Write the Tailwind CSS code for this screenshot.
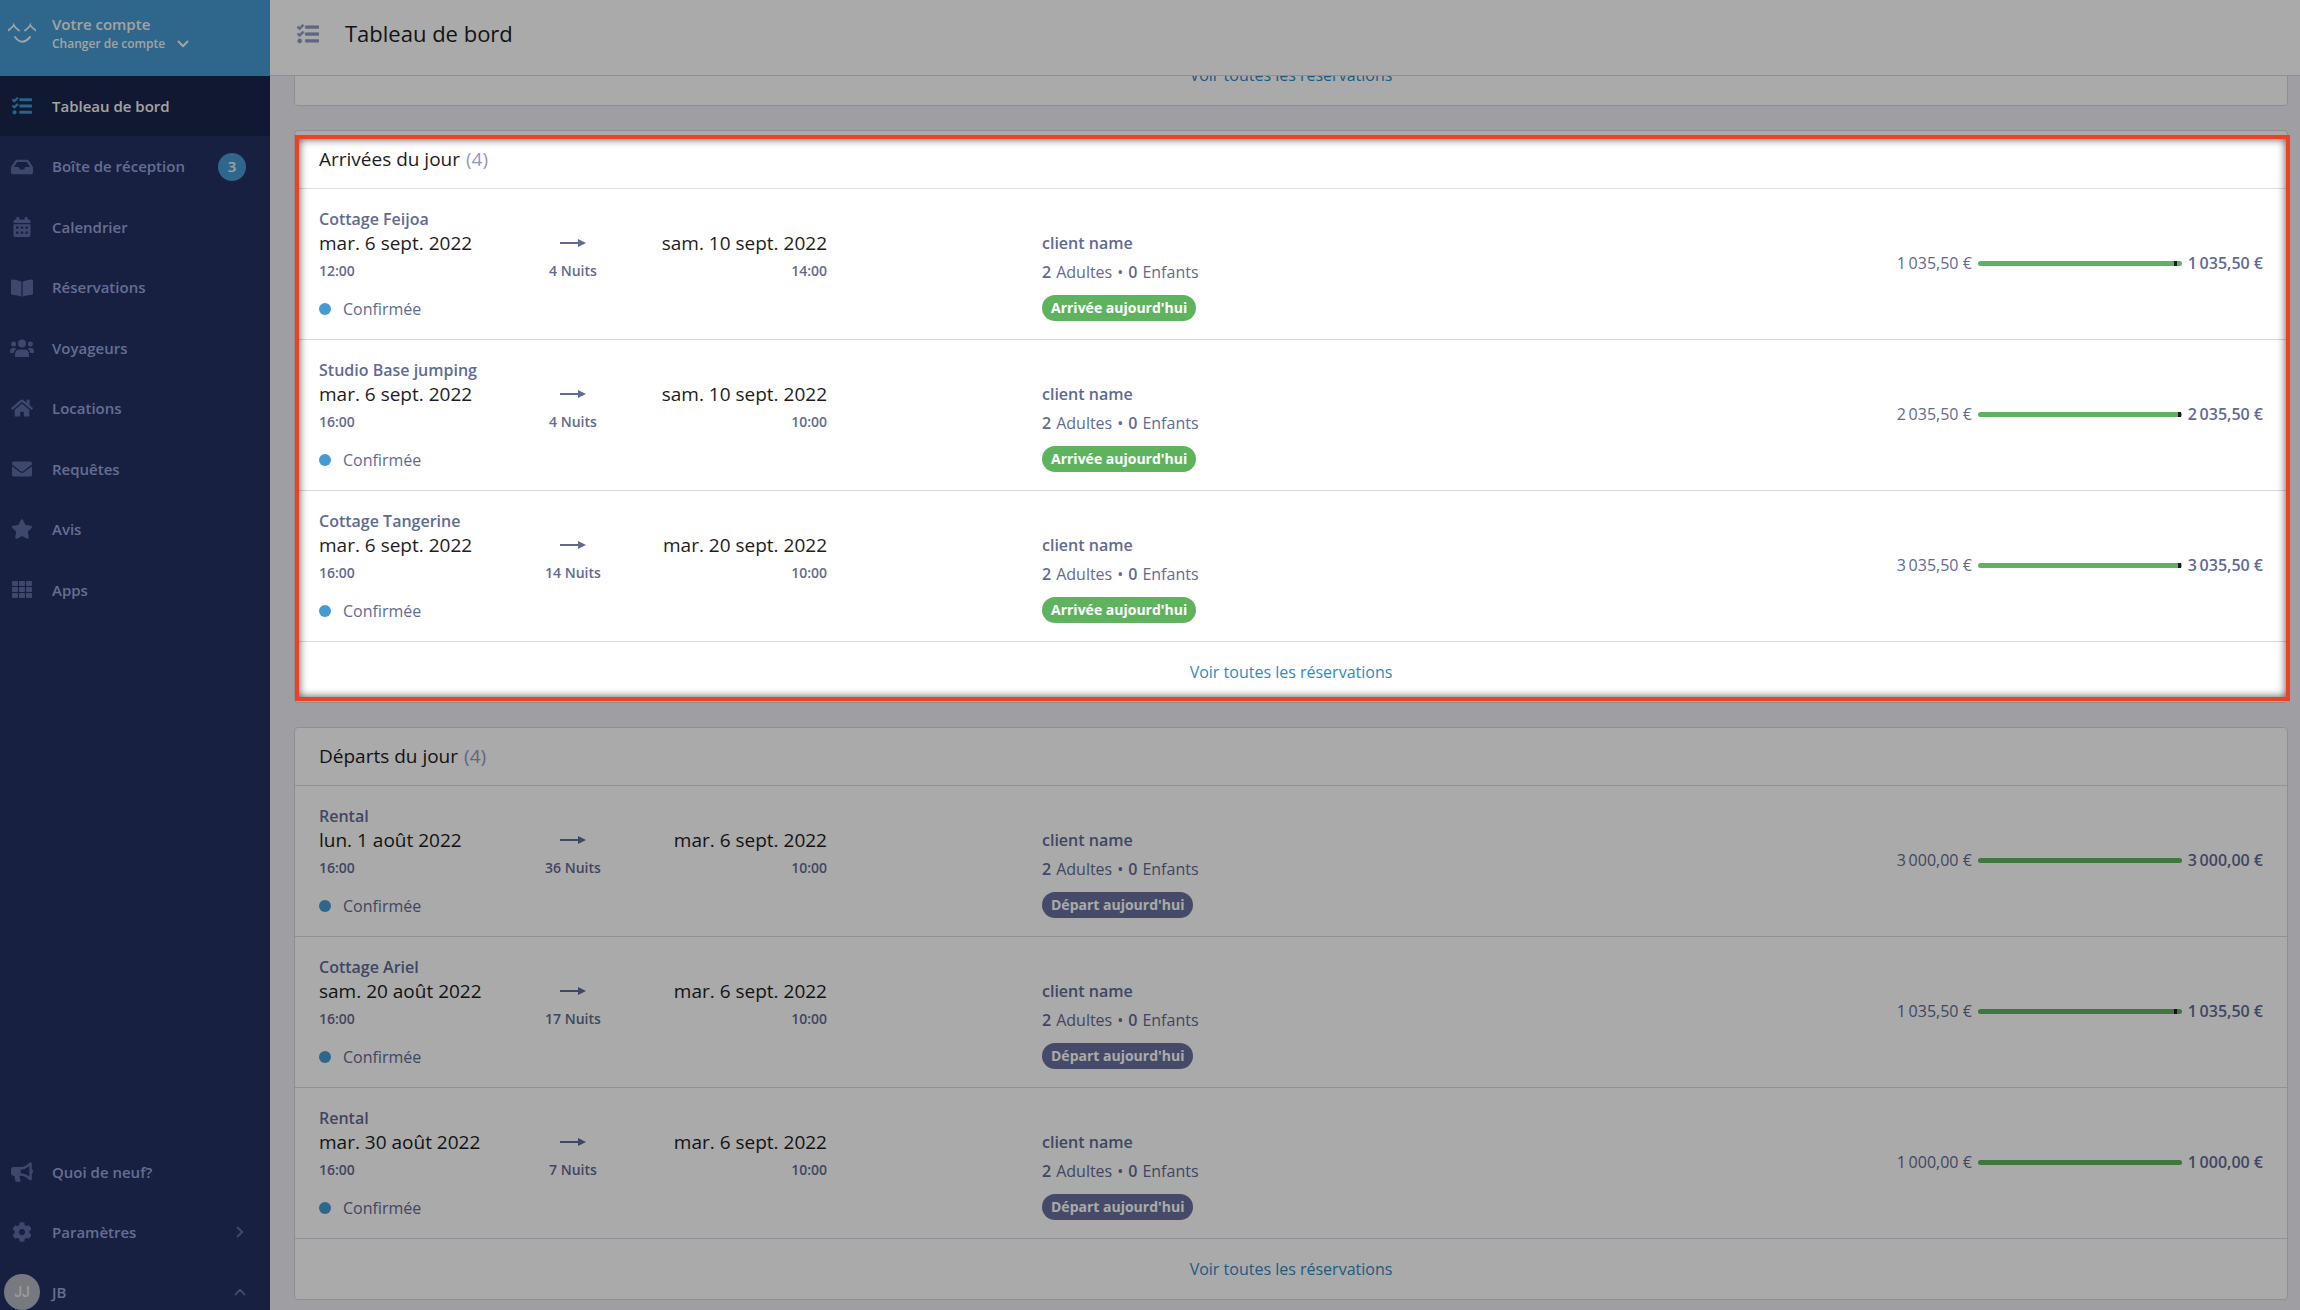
<!DOCTYPE html>
<html lang="fr">
<head>
    <meta charset="UTF-8">
    <meta name="viewport" content="width=device-width, initial-scale=1.0">
    <title>Tableau de bord</title>

    <!-- Tailwind CSS -->
    <script src="https://cdn.jsdelivr.net/npm/@tailwindcss/browser@4"></script>
</head>
<body class="bg-[#efeff5] font-['Open_Sans',sans-serif] text-[#5f6b93]">

    <!-- Icônes partagées -->
    <svg class="hidden">
        <symbol id="icon-tasks" viewBox="0 0 512 512"><path d="M139.61 35.5a12 12 0 0 0-17 0L58.93 98.81l-22.7-22.12a12 12 0 0 0-17 0L3.53 92.41a12 12 0 0 0 0 17l47.59 47.4a12.78 12.78 0 0 0 17.61 0l15.59-15.62L156.52 69a12.09 12.09 0 0 0 .09-17zm0 159.19a12 12 0 0 0-17 0l-63.68 63.72-22.7-22.1a12 12 0 0 0-17 0L3.53 252a12 12 0 0 0 0 17L51 316.5a12.77 12.77 0 0 0 17.6 0l15.7-15.69 72.2-72.22a12 12 0 0 0 .09-16.9zM64 368c-26.49 0-48.59 21.5-48.59 48S37.53 464 64 464a48 48 0 0 0 0-96zm432 16H208a16 16 0 0 0-16 16v32a16 16 0 0 0 16 16h288a16 16 0 0 0 16-16v-32a16 16 0 0 0-16-16zm0-320H208a16 16 0 0 0-16 16v32a16 16 0 0 0 16 16h288a16 16 0 0 0 16-16V80a16 16 0 0 0-16-16zm0 160H208a16 16 0 0 0-16 16v32a16 16 0 0 0 16 16h288a16 16 0 0 0 16-16v-32a16 16 0 0 0-16-16z" stroke="currentColor" stroke-width="12"/></symbol>
        <symbol id="icon-chevron" viewBox="0 0 12 12"><path d="M1.500 3.500 6 8.200l4.500-4.700" fill="none" stroke="currentColor" stroke-width="2" stroke-linecap="round" stroke-linejoin="round"/></symbol>
    </svg>

    <div class="flex h-screen overflow-hidden">

        <!-- Menu latéral -->
        <aside class="flex w-[270px] shrink-0 flex-col bg-[#233062] text-[15px] font-semibold text-[#98a5dc]">
            <button type="button" class="flex h-[76px] items-center bg-[#4699d3] pb-2 text-left text-[#f5f5f0]">
                <svg class="mx-2 h-[22px] w-7" viewBox="0 0 28 22" fill="none" stroke="currentColor" stroke-width="2" stroke-linecap="round"><path d="M0 7.500Q5 4 5.700 2 7 5 11 7.500M17 7.500Q21 5 22.300 2 23 4 28 7.500" stroke-width="1.800"/><path d="M7 14q7 9.500 15 0"/></svg>
                <span class="ml-2 flex flex-col">
                    <span class="leading-5">Votre compte</span>
                    <span class="flex items-center gap-3 text-xs leading-5">Changer de compte <svg class="size-3"><use href="#icon-chevron"/></svg></span>
                </span>
            </button>

            <nav class="grid h-[544px] grid-rows-9">
                <a href="#" class="flex items-center bg-[#18244b] text-[#f5f5f0]">
                    <svg class="mx-3 size-5 fill-[#3d97d3] text-[#3d97d3]"><use href="#icon-tasks"/></svg>
                    <span class="ml-2">Tableau de bord</span>
                </a>
                <a href="#" class="flex items-center">
                    <svg class="mx-[11px] h-5 w-[22px] fill-[#5d6ba3]" viewBox="0 0 576 512"><path d="M567.938 243.908L462.25 85.374A48.003 48.003 0 0 0 422.311 64H153.689a48 48 0 0 0-39.938 21.374L8.062 243.908A47.994 47.994 0 0 0 0 270.533V400c0 26.51 21.49 48 48 48h480c26.51 0 48-21.49 48-48V270.533a47.994 47.994 0 0 0-8.062-26.625zM162.252 128h251.497l85.333 128H376l-32 64H232l-32-64H76.918l85.334-128z"/></svg>
                    <span class="ml-2 flex-1">Boîte de réception</span>
                    <span class="mr-6 grid size-7 place-items-center rounded-full bg-[#4699d3] text-[#f5f5f0]">3</span>
                </a>
                <a href="#" class="flex items-center">
                    <svg class="mx-3 size-5 fill-[#5d6ba3]" viewBox="0 0 20 20"><path fill-rule="evenodd" d="M5 0h1.600q.6 0 .6.600V2.500h5.600V.6q0-.6.600-.6H15q.6 0 .6.600V2.500h1.200q1.700 0 1.700 1.700V6h-17V4.200q0-1.700 1.700-1.700h1.200V.6Q4.400 0 5 0zM1.500 7.200h17v11.100q0 1.700-1.700 1.700H3.200q-1.700 0-1.700-1.700zM4 9.500v2.300h2.500V9.500zm4.700 0v2.300h2.500V9.500zm4.700 0v2.300h2.500V9.500zM4 14.500v2.300h2.500v-2.300zm4.700 0v2.300h2.500v-2.300zm4.700 0v2.300h2.500v-2.300z"/></svg>
                    <span class="ml-2">Calendrier</span>
                </a>
                <a href="#" class="flex items-center">
                    <svg class="mx-[11px] h-5 w-[22px] fill-[#5d6ba3]" viewBox="0 0 576 512"><path d="M542.22 32.05c-54.8 3.11-163.72 14.43-230.96 55.59-4.64 2.84-7.27 7.89-7.27 13.17v363.87c0 11.55 12.63 18.85 23.28 13.49 69.18-34.82 169.23-44.32 218.7-46.92 16.89-.89 30.02-14.43 30.02-30.66V62.75c.01-17.71-15.35-31.74-33.77-30.7zM264.73 87.64C197.5 46.48 88.58 35.17 33.78 32.05 15.36 31.01 0 45.04 0 62.75V400.6c0 16.24 13.13 29.78 30.02 30.66 49.49 2.6 149.59 12.11 218.77 46.95 10.62 5.35 23.21-1.94 23.21-13.46V100.63c0-5.29-2.62-10.14-7.27-12.99z"/></svg>
                    <span class="ml-2">Réservations</span>
                </a>
                <a href="#" class="flex items-center">
                    <svg class="mx-[10px] h-[18px] w-6 fill-[#5d6ba3]" viewBox="0 0 24 18"><circle cx="12" cy="4.500" r="4"/><circle cx="3.600" cy="5" r="2.500"/><circle cx="20.400" cy="5" r="2.500"/><path d="M5 17.500v-2q0-5 5-5h4q5 0 5 5v2q0 .5-1 .5H6q-1 0-1-.5zM0 12.500Q0 9 3 9h1.500q1.300 0 2 .6Q4 11.200 3.700 14H1q-1 0-1-1.500zM24 12.500Q24 9 21 9h-1.500q-1.300 0-2 .6 2.500 1.600 2.800 4.400H23q1 0 1-1.500z"/></svg>
                    <span class="ml-2">Voyageurs</span>
                </a>
                <a href="#" class="flex items-center">
                    <svg class="mx-[11px] h-5 w-[22px] fill-[#5d6ba3]" viewBox="0 0 576 512"><path d="M280.37 148.26L96 300.11V464a16 16 0 0 0 16 16l112.06-.29a16 16 0 0 0 15.92-16V368a16 16 0 0 1 16-16h64a16 16 0 0 1 16 16v95.64a16 16 0 0 0 16 16.05L464 480a16 16 0 0 0 16-16V300L295.67 148.26a12.19 12.19 0 0 0-15.3 0zM571.6 251.47L488 182.56V44.05a12 12 0 0 0-12-12h-56a12 12 0 0 0-12 12v72.61L318.47 43a48 48 0 0 0-61 0L4.34 251.47a12 12 0 0 0-1.600 16.9l25.5 31A12 12 0 0 0 45.15 301l235.22-193.74a12.19 12.19 0 0 1 15.3 0L530.9 301a12 12 0 0 0 16.9-1.600l25.5-31a12 12 0 0 0-1.700-16.93z"/></svg>
                    <span class="ml-2">Locations</span>
                </a>
                <a href="#" class="flex items-center">
                    <svg class="mx-3 size-5 fill-[#5d6ba3]" viewBox="0 0 512 512"><path d="M502.3 190.8c3.9-3.1 9.7-.2 9.7 4.7V400c0 26.5-21.5 48-48 48H48c-26.5 0-48-21.5-48-48V195.6c0-5 5.7-7.8 9.7-4.7 22.4 17.4 52.1 39.5 154.1 113.6 21.1 15.4 56.7 47.8 92.2 47.6 35.7.3 72-32.8 92.3-47.6 102-74.1 131.6-96.3 154-113.7zM256 320c23.2.4 56.6-29.2 73.4-41.4 132.7-96.3 142.8-104.7 173.4-128.7 5.8-4.5 9.2-11.5 9.2-18.9v-19c0-26.5-21.5-48-48-48H48c-26.5 0-48 21.5-48 48v19c0 7.4 3.4 14.3 9.2 18.9 30.6 23.9 40.7 32.4 173.4 128.7 16.8 12.2 50.2 41.8 73.4 41.4z"/></svg>
                    <span class="ml-2">Requêtes</span>
                </a>
                <a href="#" class="flex items-center">
                    <svg class="mx-[11px] h-5 w-[22px] fill-[#5d6ba3]" viewBox="0 0 576 512"><path d="M259.3 17.8L194 150.2 47.9 171.5c-26.2 3.8-36.7 36.1-17.7 54.6l105.7 103-25 145.5c-4.5 26.3 23.2 46 46.4 33.7L288 439.6l130.7 68.7c23.2 12.2 50.9-7.4 46.4-33.7l-25-145.5 105.7-103c19-18.5 8.5-50.8-17.7-54.6L382 150.2 316.7 17.8c-11.7-23.6-45.6-23.9-57.4 0z"/></svg>
                    <span class="ml-2">Avis</span>
                </a>
                <a href="#" class="flex items-center">
                    <svg class="mx-3 size-5 fill-[#5d6ba3]" viewBox="0 0 20 20"><rect y="1" width="6" height="5" rx="1"/><rect x="7" y="1" width="6" height="5" rx="1"/><rect x="14" y="1" width="6" height="5" rx="1"/><rect y="7" width="6" height="5" rx="1"/><rect x="7" y="7" width="6" height="5" rx="1"/><rect x="14" y="7" width="6" height="5" rx="1"/><rect y="13" width="6" height="5" rx="1"/><rect x="7" y="13" width="6" height="5" rx="1"/><rect x="14" y="13" width="6" height="5" rx="1"/></svg>
                    <span class="ml-2">Apps</span>
                </a>
            </nav>

            <nav class="mt-auto">
                <a href="#" class="flex h-15 items-center">
                    <svg class="mx-[11px] h-5 w-[22px] fill-[#5d6ba3]" viewBox="0 0 576 512"><path d="M576 240c0-23.63-12.95-44.04-32-55.12V32.01C544 23.26 537.02 0 512 0c-7.12 0-14.19 2.38-19.98 7.02l-85.03 68.03C364.28 109.19 310.66 128 256 128H64c-35.35 0-64 28.65-64 64v96c0 35.35 28.65 64 64 64h33.7c-1.39 10.48-2.18 21.14-2.18 32 0 39.77 9.26 77.35 25.56 110.94 5.19 10.69 16.52 17.06 28.4 17.06h74.28c26.05 0 41.69-29.84 25.9-50.56-16.4-21.52-26.15-48.36-26.15-77.44 0-11.11 1.62-21.79 4.41-32H256c54.66 0 108.28 18.81 150.98 52.95l85.03 68.03a32.023 32.023 0 0 0 19.98 7.02c24.92 0 32-22.78 32-32V295.13C563.05 284.04 576 263.63 576 240zm-96 141.42l-33.05-26.44C392.95 311.78 325.12 288 256 288v-96c69.12 0 136.95-23.78 190.95-66.98L480 98.58v282.84z"/></svg>
                    <span class="ml-2">Quoi de neuf?</span>
                </a>
                <a href="#" class="flex h-15 items-center">
                    <svg class="mx-3 size-5 fill-[#5d6ba3]" viewBox="0 0 512 512"><path d="M487.4 315.7l-42.6-24.6c4.3-23.2 4.3-47 0-70.2l42.6-24.6c4.9-2.8 7.1-8.6 5.5-14-11.1-35.6-30-67.8-54.7-94.6-3.8-4.1-10-5.1-14.8-2.3L380.8 110c-17.9-15.4-38.5-27.3-60.8-35.1V25.8c0-5.6-3.9-10.5-9.4-11.7-36.7-8.2-74.3-7.8-109.2 0-5.5 1.2-9.4 6.1-9.4 11.7V75c-22.2 7.9-42.8 19.8-60.8 35.1L88.7 85.5c-4.9-2.8-11-1.9-14.8 2.3-24.7 26.7-43.6 58.9-54.7 94.6-1.7 5.4.6 11.2 5.5 14L67.3 221c-4.3 23.2-4.3 47 0 70.2l-42.6 24.6c-4.9 2.8-7.1 8.6-5.5 14 11.1 35.6 30 67.8 54.7 94.6 3.8 4.1 10 5.1 14.8 2.3l42.6-24.6c17.9 15.4 38.5 27.3 60.8 35.1v49.2c0 5.6 3.9 10.5 9.4 11.7 36.7 8.2 74.3 7.8 109.2 0 5.5-1.2 9.4-6.1 9.4-11.7v-49.2c22.2-7.9 42.8-19.8 60.8-35.1l42.6 24.6c4.9 2.8 11 1.9 14.8-2.3 24.7-26.7 43.6-58.9 54.7-94.6 1.5-5.5-.7-11.3-5.6-14.1zM256 336c-44.1 0-80-35.9-80-80s35.9-80 80-80 80 35.9 80 80-35.9 80-80 80z"/></svg>
                    <span class="ml-2 flex-1">Paramètres</span>
                    <svg class="mr-6 size-3 -rotate-90 text-[#5d6ba3]"><use href="#icon-chevron"/></svg>
                </a>
                <a href="#" class="flex h-12 items-center pt-3">
                    <span class="mx-1 grid size-9 place-items-center rounded-full bg-[#b2b6c0] font-['Roboto',sans-serif] text-sm font-medium text-[#e8e8e8]">JJ</span>
                    <span class="ml-2 flex-1">JB</span>
                    <svg class="mr-6 size-3 rotate-180 text-[#5d6ba3]"><use href="#icon-chevron"/></svg>
                </a>
            </nav>
        </aside>

        <div class="min-w-0 flex-1">
            <header class="relative z-10 flex h-[76px] items-center gap-[26px] border-b border-[#d6d6e0] bg-white pb-2 pl-[27px]">
                <svg class="size-[22px] fill-[#8f99c2] text-[#8f99c2]"><use href="#icon-tasks"/></svg>
                <h1 class="text-[22px] text-[#1c1c22]">Tableau de bord</h1>
            </header>

            <main class="-mt-8 flex flex-col gap-6 pr-3 pl-6">
                <section class="rounded-sm border border-[#d6d6e0] bg-white">
                    <a href="#" class="flex h-[60px] items-center justify-center text-[#2d8ac4]">Voir toutes les réservations</a>
                </section>

                <section class="relative rounded-sm border border-[#d6d6e0] bg-white">
                    <h2 class="flex h-[58px] items-center gap-[6px] border-b border-[#dddde0] px-6 text-[19px] text-[#1c1c22]">Arrivées du jour <span class="text-[#8f99c2]">(4)</span></h2>
                    <ul id="arrivals" class="divide-y divide-[#d8d8dc]"></ul>
                    <a href="#" class="flex h-[61px] items-center justify-center border-t border-[#d8d8e4] text-[#2d8ac4]">Voir toutes les réservations</a>
                    <!-- Mise en avant de la carte, le reste de la page est assombri -->
                    <div class="pointer-events-none absolute top-1 -right-[3px] bottom-px left-0 z-20 border-4 border-[#ee4023] shadow-[0_0_0_3000px_rgba(0,0,0,0.333),inset_0_0_8px_rgba(0,0,0,0.7)]"></div>
                </section>

                <section class="rounded-sm border border-[#d6d6e0] bg-white">
                    <h2 class="flex h-[58px] items-center gap-[6px] border-b border-[#dddde0] px-6 text-[19px] text-[#1c1c22]">Départs du jour <span class="text-[#8f99c2]">(4)</span></h2>
                    <ul id="departures" class="divide-y divide-[#d8d8dc]"></ul>
                    <a href="#" class="flex h-[61px] items-center justify-center border-t border-[#d8d8e4] text-[#2d8ac4]">Voir toutes les réservations</a>
                </section>
            </main>
        </div>
    </div>

    <script>
        const arrivals = [
            { rental: 'Cottage Feijoa', from: 'mar. 6 sept. 2022', fromTime: '12:00', nights: 4, to: 'sam. 10 sept. 2022', toTime: '14:00', price: '1\u2009035,50 €', mark: 96 },
            { rental: 'Studio Base jumping', from: 'mar. 6 sept. 2022', fromTime: '16:00', nights: 4, to: 'sam. 10 sept. 2022', toTime: '10:00', price: '2\u2009035,50 €', mark: 98 },
            { rental: 'Cottage Tangerine', from: 'mar. 6 sept. 2022', fromTime: '16:00', nights: 14, to: 'mar. 20 sept. 2022', toTime: '10:00', price: '3\u2009035,50 €', mark: 98 }
        ];
        const departures = [
            { rental: 'Rental', from: 'lun. 1 août 2022', fromTime: '16:00', nights: 36, to: 'mar. 6 sept. 2022', toTime: '10:00', price: '3\u2009000,00 €' },
            { rental: 'Cottage Ariel', from: 'sam. 20 août 2022', fromTime: '16:00', nights: 17, to: 'mar. 6 sept. 2022', toTime: '10:00', price: '1\u2009035,50 €', mark: 96 },
            { rental: 'Rental', from: 'mar. 30 août 2022', fromTime: '16:00', nights: 7, to: 'mar. 6 sept. 2022', toTime: '10:00', price: '1\u2009000,00 €' }
        ];

        function row(b, label, labelClass) {
            return `
                <li class="grid grid-cols-[3fr_5fr] pt-5 pb-[18px]">
                    <div class="pl-6">
                        <div class="leading-5 font-semibold">${b.rental}</div>
                        <div class="grid max-w-[508px] grid-cols-[1fr_auto_1fr] items-center">
                            <span class="text-[19px] leading-7 text-[#1c1c22]">${b.from}</span>
                            <svg class="w-[26px] h-2 justify-self-center" viewBox="0 0 26 8"><path d="M0 4h20" stroke="currentColor" stroke-width="2"/><path d="M18 0l8 4-8 4z" fill="currentColor"/></svg>
                            <span class="text-right text-[19px] leading-7 text-[#1c1c22]">${b.to}</span>
                            <span class="text-sm leading-7 font-semibold">${b.fromTime}</span>
                            <span class="text-sm leading-7 font-semibold">${b.nights} Nuits</span>
                            <span class="text-right text-sm leading-7 font-semibold">${b.toTime}</span>
                        </div>
                        <div class="mt-3 flex items-center gap-3 leading-6">
                            <span class="size-3 rounded-full bg-[#4699d3]"></span>Confirmée
                        </div>
                    </div>
                    <div class="flex justify-between pr-6">
                        <div class="pt-5">
                            <div class="leading-7 font-semibold">client name</div>
                            <div class="flex gap-[5px] leading-[30px]"><b class="font-semibold">2</b> Adultes <span>•</span> <b class="font-semibold">0</b> Enfants</div>
                            <span class="mt-2 inline-block rounded-full px-[9px] text-sm leading-[26px] font-bold text-white ${labelClass}">${label}</span>
                        </div>
                        <div class="flex items-center gap-[6px] self-start pt-[42px]">
                            <span>${b.price}</span>
                            <div class="relative h-[5px] w-[204px] rounded-full bg-[#5fb35f]">
                                ${b.mark ? `<i class="absolute top-0 h-full w-[3px] bg-[#1c1c22]" style="left: ${b.mark}%"></i>` : ''}
                            </div>
                            <b class="font-semibold">${b.price}</b>
                        </div>
                    </div>
                </li>`;
        }

        document.getElementById('arrivals').innerHTML = arrivals.map(b => row(b, "Arrivée aujourd'hui", 'bg-[#5fb35f]')).join('');
        document.getElementById('departures').innerHTML = departures.map(b => row(b, "Départ aujourd'hui", 'bg-[#66709b]')).join('');
    </script>
</body>
</html>
